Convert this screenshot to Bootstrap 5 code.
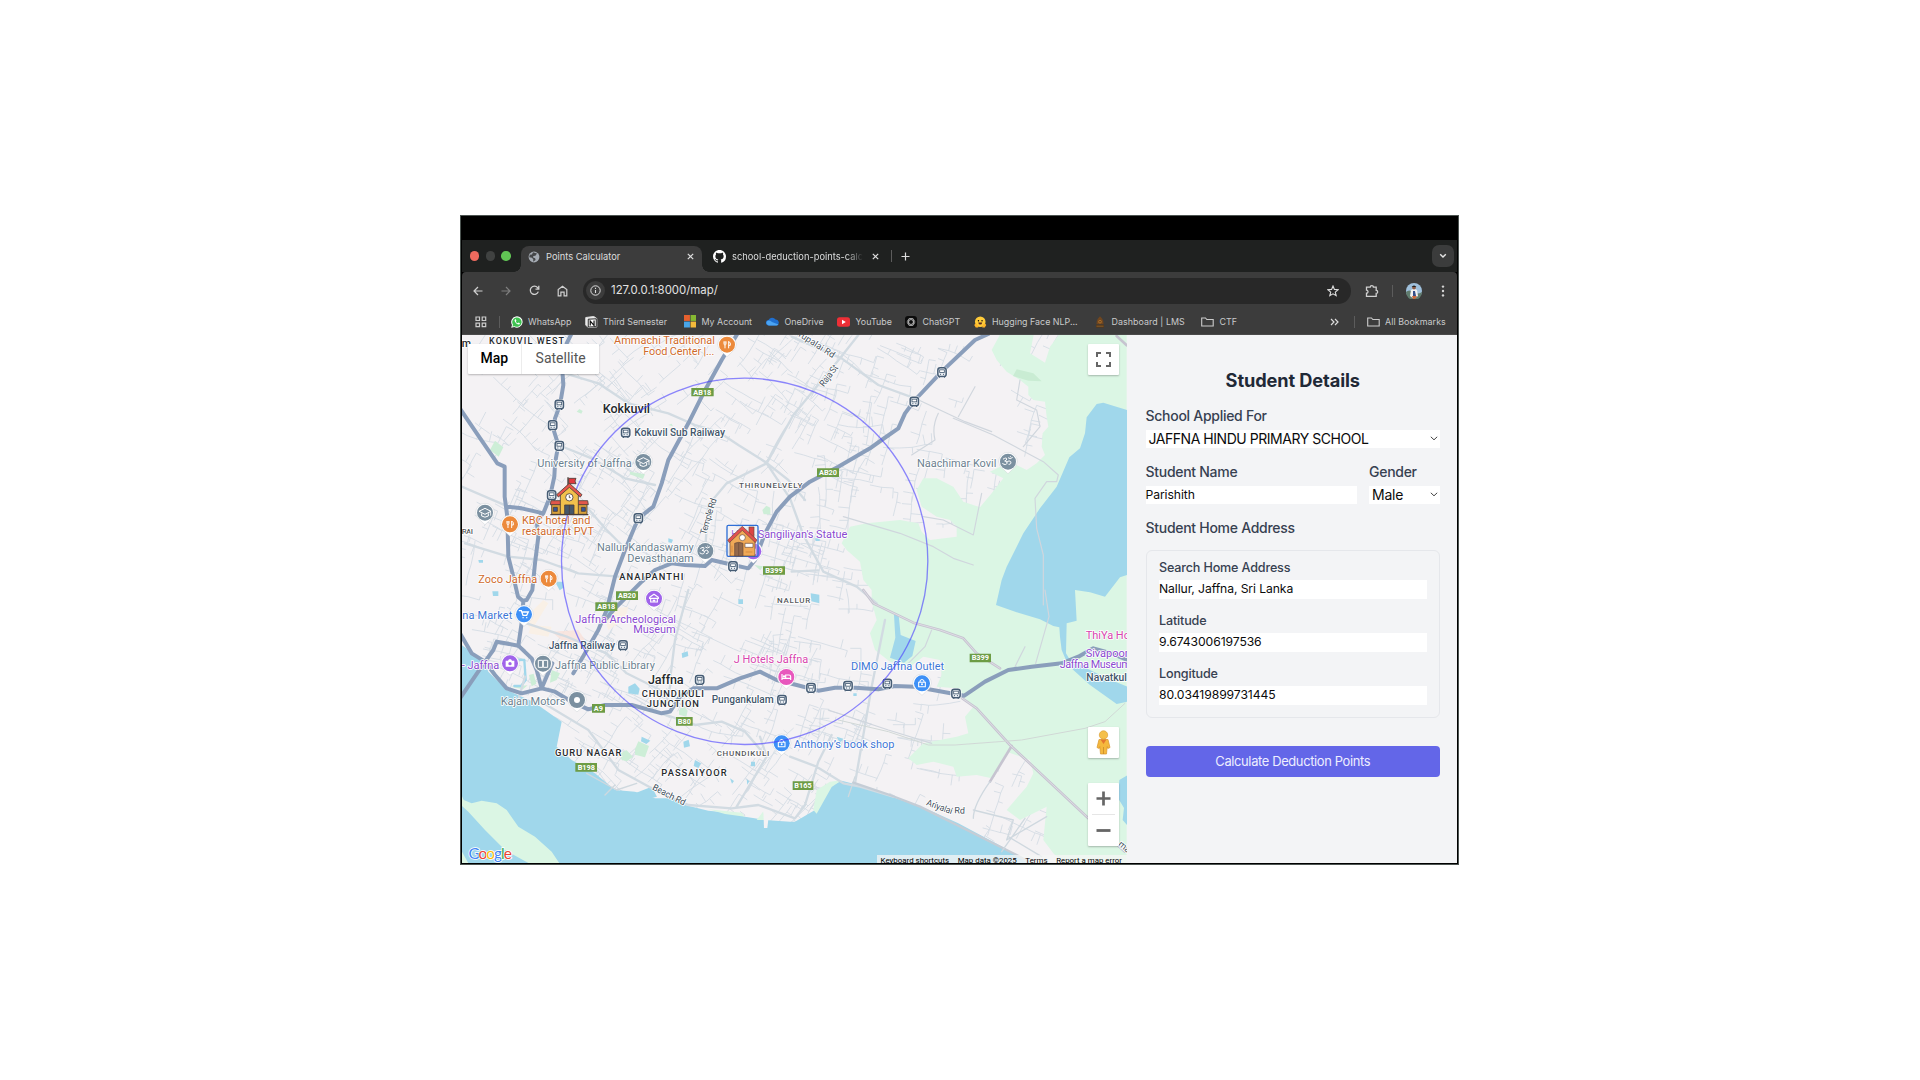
<!DOCTYPE html>
<html lang="en">
<head>
<meta charset="utf-8">
<title>Points Calculator</title>
<link href="https://cdn.jsdelivr.net/npm/bootstrap@5.3.0/dist/css/bootstrap.min.css" rel="stylesheet">
<style>
body{background:#fff;font-family:Inter,"Liberation Sans",sans-serif;padding-top:215px;height:1080px;overflow:hidden}
svg{display:block;flex:none}
.frame{width:999px;height:649.6px;margin-left:460px;background:#000;border:1px solid #4c5451;padding:0 1px 1px 1px}
.notch{height:24px}
.strip{height:32px;background:#1f2120;color:#dcdddd;font-size:9.3px;padding-left:8px}
.dot{width:9.4px;height:9.4px;border-radius:50%;margin-right:6.3px}
.tab-on{width:181px;height:26px;margin-top:6px;margin-left:4px;background:#3c3c3c;border-radius:8px 8px 0 0;padding:0 0 4.5px 7px;position:relative}
.tab-on:before,.tab-on:after{content:"";position:absolute;bottom:0;width:7px;height:7px}
.tab-on:before{left:-7px;background:radial-gradient(circle at 0 0,transparent 6.5px,#3c3c3c 7px)}
.tab-on:after{right:-7px;background:radial-gradient(circle at 100% 0,transparent 6.5px,#3c3c3c 7px)}
.tab-off{width:189px;padding:1px 0 0 11px}
.fade-title{width:131px;overflow:hidden;white-space:nowrap;-webkit-mask-image:linear-gradient(90deg,#000 88%,transparent)}
.vsep{width:1px;height:12px;background:#5c5c5c}
.chev{width:22px;height:22px;border-radius:7px;background:#3b3c3c;margin-right:3px}
.tools{height:36px;background:#3c3c3c;color:#c9c9c9;border-radius:4px 4px 0 0;padding:1.5px 0 0 8px}
.tools .slot{width:28.2px;display:flex;justify-content:center}
.omni{width:768px;height:26px;border-radius:13px;background:#282828;margin-left:7px;padding-left:3px}
.info-dot{width:19px;height:19px;border-radius:50%;background:#3c3c3c}
.url{font-size:11.4px;color:#e2e2e2;margin-left:6px}
.marks{height:27px;background:#3c3c3c;color:#c9cacb;font-size:8.9px;display:grid;grid-template-columns:24px 12px 75.5px 97.5px 82.5px 71px 68px 69px 120px 107px 128.5px 24px 13px 90px;padding:1px 0 0 12.5px;white-space:nowrap;border-bottom:1px solid #4a4a4a}
.marks>span{display:flex;align-items:center;gap:5.5px}
.marks>span:nth-child(4){margin-left:-1px}
.marks>span:nth-child(n+10){letter-spacing:.06px}
.mapbox{width:665px;position:relative;overflow:hidden;background:#f4f2f4;font-family:Roboto,sans-serif}
.ctl{position:absolute;background:#fff;box-shadow:0 1px 2px rgba(0,0,0,.25);border-radius:1px}
.ctl-type{left:5.6px;top:8.5px;width:131.6px;height:30.5px;font-size:14px;color:#565656}
.ctl-type .w-map{width:54.5px;border-right:1px solid #ececec;color:#000;font-weight:500}
.ctl-sq{right:8px;width:31px;height:31px}
.zoom-half{flex:1 1 0;display:flex;align-items:center;justify-content:center}
.legal{position:absolute;right:0;bottom:-4px;height:12px;background:rgba(245,245,245,.75);font-size:7.9px;line-height:12px;color:#000;white-space:nowrap;padding:0 5px 0 4px;gap:8.6px}
.side{background:#f3f4f6;padding:36px 17px 0 18.5px;color:#374151}
.side h1{font-size:18.2px;font-weight:700;color:#1f2937;line-height:18px;margin:0 0 17px;letter-spacing:-.1px}
.lab{font-size:14px;line-height:19px;height:23.5px;font-weight:500;letter-spacing:-.28px}
.fld{background:#fff;height:18.5px;color:#0b0b0b;line-height:18.5px;font-size:12.2px;letter-spacing:-.1px}
.pick{font-size:14px;padding:0 2px 0 3px;letter-spacing:-.46px}
.pick.short{letter-spacing:-.2px}
.group{border:1px solid #e5e7eb;border-radius:6px;height:168px;padding:8px 12.5px;margin-top:5px}
.group .lab{font-size:12.6px;height:21px;line-height:18px;letter-spacing:-.17px}
.group .fld{margin-bottom:13.6px}
.calc,.calc:hover{background:#6366e8;color:#eef;height:31.3px;border-radius:4px;font-size:12.9px;letter-spacing:-.35px;margin-top:27.5px;padding:0;border:0;line-height:32px}
svg text{font-family:Roboto,sans-serif}
.halo text{paint-order:stroke;stroke:#fff;stroke-width:5px;stroke-linejoin:round}
.or{fill:#cf6a2c;font-size:33px}.gy{fill:#6b7f8f;font-size:33px}.pu{fill:#8a49d0;font-size:33px}.bl{fill:#3d76d6;font-size:33px}.pk{fill:#d845ae;font-size:33px}
.st{fill:#43566b;font-size:31px;font-weight:500}.town{fill:#26292d;font-weight:500}.rd{fill:#43505c;font-size:27px}
.shield text{fill:#fff;font-weight:700;font-size:22px;text-anchor:middle}
</style>
</head>
<body>
<div class="frame d-flex flex-column">
  <div class="notch flex-shrink-0"></div>
  <div class="strip flex-shrink-0 d-flex align-items-center">
    <i class="dot" style="background:#ed6a5e"></i><i class="dot" style="background:#404241"></i><i class="dot" style="background:#61c554"></i>
    <div class="tab-on d-flex align-items-center">
      <svg width="12" height="12" viewBox="0 0 12 12"><circle cx="6" cy="6" r="5.4" fill="#a5abb3"/><path d="M5 1.2 4 3.4l-2.2.4-.6 2.4 2.8.5 1.4 1.7-.4 2.4 2.6-1.7-.5-1.9-2-.8.2-1.3 2.1-.4L9 2.400z" fill="#454749"/></svg>
      <span class="ms-auto" style="width:143.5px">Points Calculator</span>
      <svg width="7" height="7" viewBox="0 0 7 7" style="margin-right:8.5px;margin-left:-3px"><path d="M.8.8l5.400 5.400M6.200.8.8 6.200" stroke="#ddd" stroke-width="1.200"/></svg>
    </div>
    <div class="tab-off d-flex align-items-center">
      <svg width="13" height="13" viewBox="0 0 16 16"><path fill="#fff" d="M8 0C3.58 0 0 3.58 0 8c0 3.54 2.29 6.53 5.47 7.59.4.07.55-.17.55-.38 0-.19-.01-.82-.01-1.49-2.01.37-2.53-.49-2.69-.94-.09-.23-.48-.94-.82-1.13-.28-.15-.68-.52-.01-.53.63-.01 1.08.58 1.23.82.72 1.21 1.87.87 2.33.66.07-.52.28-.87.51-1.07-1.78-.2-3.64-.89-3.64-3.95 0-.87.31-1.59.82-2.15-.08-.2-.36-1.02.08-2.12 0 0 .67-.21 2.2.82a7.4 7.4 0 0 1 4 0c1.53-1.04 2.2-.82 2.2-.82.44 1.1.16 1.92.08 2.12.51.56.82 1.27.82 2.15 0 3.07-1.87 3.75-3.65 3.95.29.25.54.73.54 1.48 0 1.07-.01 1.93-.01 2.2 0 .21.15.46.55.38A8.01 8.01 0 0 0 16 8c0-4.42-3.58-8-8-8"/></svg>
      <span class="fade-title" style="margin-left:6px">school-deduction-points-calc</span>
      <svg width="7" height="7" viewBox="0 0 7 7" style="margin-left:9px"><path d="M.8.8l5.400 5.400M6.200.8.8 6.200" stroke="#ddd" stroke-width="1.200"/></svg>
    </div>
    <i class="vsep"></i>
    <svg width="9" height="9" viewBox="0 0 9 9" style="margin-left:8.500px"><path d="M4.500.5v8M.5 4.500h8" stroke="#ddd" stroke-width="1.200"/></svg>
    <span class="chev ms-auto d-flex align-items-center justify-content-center"><svg width="8" height="6" viewBox="0 0 8 6"><path d="M1.200 1.200 4 4l2.800-2.800" fill="none" stroke="#e5e5e5" stroke-width="1.400"/></svg></span>
  </div>
  <div class="tools flex-shrink-0 d-flex align-items-center">
    <span class="slot" style="width:16px"><svg width="10" height="10" viewBox="0 0 10 10"><path d="M9.500 5H1M5 1 1 5l4 4" fill="none" stroke="#d0d0d0" stroke-width="1.200"/></svg></span>
    <span class="slot" style="width:40px"><svg width="10" height="10" viewBox="0 0 10 10"><path d="M.5 5H9M5 1l4 4-4 4" fill="none" stroke="#7f7f7f" stroke-width="1.200"/></svg></span>
    <span class="slot" style="width:16px"><svg width="11" height="11" viewBox="0 0 11 11"><path d="M9.300 6.600A4.100 4.100 0 1 1 8.600 2.700L9.600 3.800M9.800.8v3.300H6.500" fill="none" stroke="#d0d0d0" stroke-width="1.300"/></svg></span>
    <span class="slot" style="width:40px"><svg width="11" height="12" viewBox="0 0 11 12"><path d="M1.200 10.800V4.600L5.500 1.200l4.300 3.400v6.200H7.100V7.200H3.900v3.600z" fill="none" stroke="#d0d0d0" stroke-width="1.200"/></svg></span>
    <div class="omni d-flex align-items-center" style="margin-left:1px">
      <span class="info-dot d-flex align-items-center justify-content-center"><svg width="11" height="11" viewBox="0 0 11 11"><circle cx="5.500" cy="5.500" r="4.700" fill="none" stroke="#ddd"/><path d="M5.500 4.900v3.200M5.500 2.800v1.200" stroke="#ddd" stroke-width="1.100"/></svg></span>
      <span class="url">127.0.0.1:8000/map/</span>
      <svg width="12" height="12" viewBox="0 0 12 12" class="ms-auto" style="margin-right:12px"><path d="m6 1 1.400 3.400 3.700.3-2.800 2.400.9 3.600L6 8.800l-3.200 1.900.9-3.600L.9 4.700l3.700-.3z" fill="none" stroke="#ddd" stroke-width="1.100"/></svg>
    </div>
    <svg width="14" height="14" viewBox="0 0 14 14" style="margin-left:14px"><path d="M1.500 3.200h3.700a1.600 1.600 0 0 1 3.200 0h2.800v3.200a1.500 1.500 0 0 1 0 3v3H1.500V9.200a1.500 1.500 0 0 0 0-3z" fill="none" stroke="#d0d0d0" stroke-width="1.300"/></svg>
    <i class="vsep" style="margin-left:13px"></i>
    <svg width="16" height="16" viewBox="0 0 16 16" style="margin-left:13px"><circle cx="8" cy="8" r="8" fill="#9fc0dc"/><path d="M0 9q3-3 7 0t9 0A8 8 0 0 1 0 9" fill="#607c6e"/><path d="M5 7q3-2 6 0l1 6-4 3-4-3z" fill="#f1f1f1"/><path d="M7 8h2l1 5H7z" fill="#344f8a"/><circle cx="8" cy="4.600" r="1.900" fill="#8b5a45"/><path d="M5.600 4q2.400-3 4.800 0z" fill="#222"/><path d="M6 13h5l-2 3H7z" fill="#c8693f"/></svg>
    <svg width="4" height="12" viewBox="0 0 4 12" style="margin-left:18.500px" fill="#d5d5d5"><circle cx="2" cy="1.600" r="1.200"/><circle cx="2" cy="6" r="1.200"/><circle cx="2" cy="10.400" r="1.200"/></svg>
  </div>
  <div class="marks flex-shrink-0">
    <span><svg width="12" height="12" viewBox="0 0 12 12"><path d="M1 1h3.500v3.500H1zM7.200 1h3.500v3.500H7.200zM1 7.200h3.500v3.500H1zM7.200 7.200h3.500v3.500H7.200z" fill="none" stroke="#ccc" stroke-width="1.200"/></svg></span>
    <span><i class="vsep"></i></span>
    <span><svg width="12" height="12" viewBox="0 0 12 12"><path d="M.2 11.800 1 8.900A5.700 5.700 0 1 1 3.200 11z" fill="#fff"/><path d="M1.400 10.600 2 8.700a4.700 4.700 0 1 1 1.600 1.500z" fill="#3fc351"/><path d="M4 3.200q-1.200 1 .3 3.100T7.700 8.600q1.300-.2 1.200-1.300L7.500 6.600l-.7.7Q5.400 6.700 4.900 5.400l.5-.7L4.800 3.200z" fill="#fff"/></svg>WhatsApp</span>
    <span><svg width="12.500" height="12" viewBox="0 0 12 12"><path d="M.5 1.500 8.500.5 11.500 2.500v8.500L3 11.600.5 9z" fill="#eee" stroke="#ddd"/><path d="M3 3.200 11 2.800v7.900l-8 .3z" fill="#fff" stroke="#111" stroke-width=".9"/><path d="M5 9.500V5l3.800 4.300V4.400" fill="none" stroke="#111" stroke-width="1.200"/></svg>Third Semester</span>
    <span><svg width="12.500" height="12.500" viewBox="0 0 12 12"><path fill="#e5602e" d="M0 0h5.700v5.700H0z"/><path fill="#86b832" d="M6.300 0H12v5.700H6.300z"/><path fill="#49a5e8" d="M0 6.300h5.700V12H0z"/><path fill="#f3b93a" d="M6.300 6.300H12V12H6.300z"/></svg>My Account</span>
    <span><svg width="13" height="9" viewBox="0 0 13 9"><path d="M2.800 8.500a2.700 2.700 0 0 1-.3-5.400A3.900 3.900 0 0 1 9.500 2.600 3 3 0 0 1 10.500 8.500z" fill="#1f6fd0"/><path d="M2.800 8.500A2.700 2.700 0 0 1 1 4.200Q3 2.500 6 5l6.500 2.500q-.7 1-2 1z" fill="#4ba4f2"/></svg>OneDrive</span>
    <span><svg width="13" height="10" viewBox="0 0 13 10"><rect width="13" height="9.600" y=".2" rx="2.500" fill="#ee2f36"/><path d="M5 2.800v4.400L8.800 5z" fill="#fff"/></svg>YouTube</span>
    <span><svg width="12" height="12" viewBox="0 0 12 12"><rect width="12" height="12" rx="3" fill="#0c0c0c"/><g fill="none" stroke="#ddd" stroke-width=".55"><ellipse cx="6" cy="6" rx="4" ry="2.300"/><ellipse cx="6" cy="6" rx="4" ry="2.300" transform="rotate(60 6 6)"/><ellipse cx="6" cy="6" rx="4" ry="2.300" transform="rotate(120 6 6)"/></g></svg>ChatGPT</span>
    <span><svg width="12.500" height="12" viewBox="0 0 12 12"><circle cx="6" cy="5.800" r="5.300" fill="#ffcb39"/><path d="M0 9q1.500-2.500 3.500 0L4 11.500H1.500zM12 9q-1.500-2.500-3.500 0L8 11.500h2.500z" fill="#ffb52a"/><circle cx="4.200" cy="4.800" r=".7"/><circle cx="7.800" cy="4.800" r=".7"/><path d="M4 6.400h4Q7.700 8.600 6 8.600T4 6.400" fill="#5b2b22"/></svg>Hugging Face NLP...</span>
    <span><svg width="12" height="12" viewBox="0 0 12 12"><path d="M6 .3 8 2.600q2.200 3 1.500 5.600h-7Q1.800 5.600 4 2.600z" fill="#70461f"/><circle cx="6" cy="5.800" r="1.700" fill="#b3742c"/><circle cx="6" cy="5.800" r=".7" fill="#3b2512"/><path d="M2 8.800h8v2.800H2z" fill="#553719"/><path d="M2.500 10.200h7" stroke="#9a6a30" stroke-width=".7"/></svg>Dashboard | LMS</span>
    <span><svg width="13" height="10" viewBox="0 0 13 10"><path d="M.7 9V1h3.800l1.300 1.500h6.400V9z" fill="none" stroke="#ccc" stroke-width="1.100"/></svg>CTF</span>
    <span><svg width="9" height="8" viewBox="0 0 9 8"><path d="M1 1l3 3-3 3M5 1l3 3-3 3" fill="none" stroke="#ddd" stroke-width="1.200"/></svg></span>
    <span><i class="vsep"></i></span>
    <span><svg width="13" height="10" viewBox="0 0 13 10"><path d="M.7 9V1h3.800l1.300 1.500h6.400V9z" fill="none" stroke="#ccc" stroke-width="1.100"/></svg>All Bookmarks</span>
  </div>
  <div class="d-flex flex-grow-1" style="min-height:0">
    <div class="mapbox flex-shrink-0">
      <svg width="665" height="529" viewBox="462 335 665 529">
        <defs>
          <g id="pin"><path d="M-28 0a28 28 0 1 1 56 0q0 14-17 26L0 36-11 26Q-28 14-28 0" fill="#fff" stroke="#b9bec4" stroke-width="1"/><circle r="24" fill="currentColor"/></g>
          <g id="stn"><rect x="-17" y="-17" width="34" height="34" rx="11" fill="#fff" opacity=".85"/><rect x="-12.500" y="-13.500" width="25" height="26" rx="7" fill="#e8edf2" stroke="#465c74" stroke-width="4.500"/><rect x="-7" y="-7.500" width="14" height="8" fill="#fff" stroke="#465c74" stroke-width="2.500"/><path d="M-6 6h3M3 6h3M-5 13l-3 3M5 13l3 3" stroke="#465c74" stroke-width="3"/></g>
          <path id="food" d="M-9-10v7q0 4 3 4v10M-3-10v7q0 4-3 4M-6-10v8M5 11V-10q7 4 5 12H5" fill="none" stroke="#fff" stroke-width="3"/>
          <g id="cap"><path d="M0-13 18-4 0 5-18-4z" fill="none" stroke="#fff" stroke-width="3"/><path d="M-10 2v8q10 7 20 0V2" fill="none" stroke="#fff" stroke-width="3"/><path d="M17-3V9" stroke="#fff" stroke-width="2.500"/></g>
          <path id="om" d="M-14-8q10-6 10 0 0 5-6 6 9 0 7 7-3 7-13 1M-3 1q7-7 11-1 3 8-5 8M1-11q5 5 12-1M7-15h.5" fill="none" stroke="#fff" stroke-width="3" stroke-linecap="round"/>
          <path id="lock" d="M-10-3h20v13h-20zM-6-2v-5q6-9 12 0v5" fill="none" stroke="#fff" stroke-width="3.200"/>
        </defs>
        <g transform="translate(455 330) scale(.33333)" fill="none" stroke-linecap="round" stroke-linejoin="round">
          <path id="streets" stroke="#d5dde4" stroke-width="2.700"/>
          <!-- built-up blocks and parks -->
          <g fill="#faf0e4" opacity=".85"><path d="M205 870l60-60 15 10-50 80zM230 885l60 5-10 30-60-10zM440 840l80-10-10 40-50 30z"/><path d="M290 905l80-5 20 30-60 10z" fill="#f9e3dc"/></g>
          <g fill="#cdeed7"><path d="M105 360l15-28 25 20-14 28zM525 425l45 8-6 14-40-14zM922 540l12-13 12 6v20h-20zM500 1290l-6-18 20-12 20 20-18 14zM540 1258l10-24 32 14-12 34-30-8zM290 1020l25 10-10 20-20 8zM672 1140l14-12 12 14-4 18-22-6zM365 245l8-8 10 6-4 8zM222 1035l14-4 8 30-14 8zM898 705l26 4-8 12zM168 1070l50-4-14 12zM640 285l10-4 4 8z"/></g>
          <!-- eastern fields -->
          <g transform="translate(1005 0)">
            <path fill="#dbf6e4" d="M632 10 605 60l15 30 30 35 40 25 25 20v25l15 15 35 5 5 45 5 30-17 20-3 40 10 25-25 25-30 20-40-20-40 10-30 15 40 20-35 45-35 42-50-17-30-45-50-25h-40l-20 35 15 50 45 30 40 10 20 20v30l-80 10-25-25-10-25-55-10-100 10-50 10-25 50 15 20 40 35 10 55 25 30v35l15 55-20 40 15 50 45 35 60 15 40-30 50 10 5 45-15 35 60 5 20 25 30 30-25 30 10 50-35 10-100 20-45 45 25 20 50-10 60 15 10 30 60-5 45 10 45-80 70 25 10 40-20 40-60 70 40 30 80-40-5 50-5 50 30 40 40 40h180V10H810l-30 40-15 48-45-28 12-60z"/>
            <path fill="#c9ecd3" d="M680 118l50 12 25 24-40-2-46-14z"/>
            <path fill="#a0d7eb" d="M1012 240 940 218l-20 4-30 40-5 48-15 45-32 27-38 88-50 65-50 75-20 40-30 60-15 40-17 75 72 25 60 18 40 20 18 4 2 28 5 40 15 35 20 25 50 45 80 57 32-7v-45l-62-25-80-40-30-15-12-20 2-90 30-8-5-92 45 7 45 13 45-58 22-7zM312 855l14 0 6 60 45 18-10 45-25 20-42-15 16-60zM988 1350l24-14v150l-14-16 4-36-18-30z"/>
            <path fill="#a0d7eb" d="M62 790l26 4v26l-24-6zM140 1220l20 6-10 14zM190 1090h10v8h-10zM75 625h14v8H77z"/>
          </g>
          <!-- sea, island, harbour -->
          <g transform="translate(0 780)">
            <path fill="#a0d7eb" d="M10 160l10 5 65 45 15 35 55 55 40 18 40 17 85 60-15 75 45 40 70 40 60 50 60 5 60 20h50l40 20 70 17 80 8 30 10 60 10 75 5h15l60-35 10-20 30-50 40-18 50 13 100 35 100 35 100 45 140 75 95 60H10z"/>
            <path fill="#dbf6e4" d="M18 612l8 18 24 10 30-8 45 8 30 20 35 50 50 30 50 45 30 45H240l-90-50-60-60-50-55-22-20z"/>
            <path fill="#dbf6e4" d="M1075 660l10-60 40-25 35-4-30 20-45 80zM760 658l100 10 10 12-60-8zM905 690l20-26 6 26zM18 780l25 45H18z"/>
            <path fill="#f4f2f4" d="M925 660l18 2-6 52h-10z"/>
            <path fill="#a0d7eb" d="M520 290l20-10 14 16-4 18-30-4zM560 440l26 12-12 10-16-8zM720 510l18 10-8 14-14-6zM685 455l16-6 4 20-18 4zM680 190l18-6 2 14-18 6zM850 28h14v14h-14zM888 515h12v14h-12zM825 565l12 8-6 8zM875 568l8 6-6 10zM540 610l50-20 16 30-30 8zM455 68l8-14 8 16v20zM112 4h18v14h-16z"/>
            <path d="M150 208q8-16 16 0l42 2 4 60-14 18h-20" stroke="#a0d7eb" stroke-width="7"/>
            <path d="M450 615l30-30M545 580l-60 20-90-50M1180 620l20-60" stroke="#cfd8de" stroke-width="4"/>
          </g>
          <path d="M300 755l24 0 2 18-12 8zM640 625l14 4-4 10-10-2zM70 690h14v8H72z" fill="#a0d7eb"/>
          <!-- secondary roads -->
          <g stroke="#d2dbe2" stroke-width="7">
            <path d="M330 130l100 30 90 60 120 30 80 35 70 20 60 40 80 50 70 55 50 60M1005 275q-40 60-70 125l-120 60-55 65-10 140M20 470l140 60M310 345l100 40 100 60 90 20M300 490l90 35 60 70 50 50M30 640l130 40 100 10 110 40 120 10M935 400l70 105 40 110 60 110 100 45 60 50M1210 15l-55 70-140 170-80 145M1010 20l150 65 110 80 110 40M700 780l-40 150-15 120M650 1050l-20 80"/>
            <path d="M215 880l120 40 120 50 60 60 120 60M250 1110l150 90 90 120 110 60 100 45 130 10 80-10 110 40 30-40 40-130 40-80M620 1150l100 35 80-10 70 30 60 70M845 1430l90-150-20-60M1290 870l-40 200-50 290M1005 1280l80 30 80 50 50 10 100 30M1010 725l80-4M190 1110l20-70"/>
          </g>
          <g stroke="#d0d6dd" stroke-width="3.500">
            <path d="M1380 205l150 70 80 30M1450 250q-20 40-10 80l-70 45M1495 265l120 50 150 80 45 40-5 20h-30l-35 50 5 90 20 80v150M1560 170l-50 90M1695 150l-10 60 60 30 10 50-50 60M1580 490l-25 125-90-45-60-10M1165 560l170 50 100 40 60 35 60 20M1770 780l12 80-40 140M1430 900l-20 50-50 50M1430 1240l-130-40-180-60M1710 950l-30 60"/>
          </g>
          <g stroke="#c6c4d0" stroke-width="8"><path d="M1225 780l30 40 120 58 80 22 70 25 40 45 70 45M1503 1092l62 43 100 110 70 65 160 150 115 105M1670 1248l-65 107M1985 18l30 28"/></g>
          <g stroke="#dfdde5" stroke-width="3"><path d="M1225 780l30 40 120 58 80 22 70 25 40 45 70 45M1503 1092l62 43 100 110 70 65 160 150 115 105"/></g>
          <path d="M1150 1170l150 35 120 40h80l200-15 190-35 60-20 60-55" stroke="#d1d8d6" stroke-width="3"/>
          <path d="M1195 1358l110 37 90 35 130 65 160 80 90 50" stroke="#c5cdd6" stroke-width="7"/>
          <path d="M1605 1355q-50 70-50 110M1555 1440l120 30-20 60 120-70M1640 1565l70-100M1660 1520l100 60" stroke="#cfd8df" stroke-width="4"/>
          <!-- main roads -->
          <g stroke="#8a9ebb" stroke-width="12">
            <path d="M350 10l-15 30-13 80 3 45-10 60-15 40-4 35 14 45-10 55-2 40-13 60-20 50-20 20 5 50-10 80-8 80-17 30-12 2-14-12-14-60-15-60-3-120-8-60v-90l-22-10-55-80-57-84M155 530l45 5 65 15M205 812l-4 60-11 75"/>
            <path d="M848 10l-48 80-55 100-45 90-60 110-20 70-25 70-45 35-40 95-30 80-25 100-25 60-40 70-35 60"/>
            <path d="M1600 12l-40 18-100 95-80 85-30 40-20 45-50 35-35 25-95 55-85 45-60 45-40 45-35 65-30 80-20 25-45-10-65-15-20 18-60-3-40-5-50 20-40 35-50 50-30 30-25 30"/>
            <path d="M15 910l35 60 40 25 30 40 35 40 45 15 60-15 40 10 50 30 50 23 50-13h80l90 25 25-5 30-45 40-25h70l70-30 60-20 50 25 60 15 65 17 50-9h60l70 5 50-10 60 2 70 13 78 14 62-42 70-35 70-10 90-10 50-20 45-25 55 15 75 32"/>
            <path d="M15 1105l75-110 25-35 10-25 65 12 40 38 15 35 15 55 32-75"/>
          </g>
        </g>
        <!-- labels -->
        <g class="halo" transform="translate(455 330) scale(.33333)">
          <text x="20" y="50" font-size="32" class="town">m</text>
          <text x="102" y="42" textLength="225" font-size="27" class="town">KOKUVIL WEST</text>
          <text x="477" y="42" textLength="303" class="or">Ammachi Traditional</text>
          <text x="565" y="75" textLength="213" class="or">Food Center |...</text>
          <text x="443" y="250" textLength="142" font-size="38" class="town">Kokkuvil</text>
          <text x="538" y="318" textLength="272" class="st">Kokuvil Sub Railway</text>
          <text x="247" y="410" textLength="283" class="gy">University of Jaffna</text>
          <text x="852" y="474" textLength="190" font-size="24" class="town" fill-opacity=".8">THIRUNELVELY</text>
          <text x="20" y="612" textLength="34" font-size="24" class="town" fill-opacity=".8">RAI</text>
          <text x="201" y="583" textLength="205" class="or">KBC hotel and</text>
          <text x="201" y="615" textLength="216" class="or">restaurant PVT</text>
          <text x="426" y="663" textLength="290" class="gy">Nallur Kandaswamy</text>
          <text x="517" y="696" textLength="199" class="gy">Devasthanam</text>
          <text x="70" y="760" textLength="177" class="or">Zoco Jaffna</text>
          <text x="493" y="751" textLength="192" font-size="28" class="town">ANAIPANTHI</text>
          <text x="828" y="623" class="pu">H</text>
          <text x="908" y="623" textLength="269" class="pu">Sangiliyan's Statue</text>
          <text x="0" y="0" transform="translate(752 616) rotate(-73)" class="rd" textLength="113">Temple Rd</text>
          <text x="0" y="0" transform="translate(1025 15) rotate(33)" class="rd" textLength="128">Tupalai Rd</text>
          <text x="0" y="0" transform="translate(1106 172) rotate(-53)" class="rd" textLength="74">Raja St</text>
          <text x="1386" y="411" textLength="238" class="gy">Naachimar Kovil</text>
          <text x="966" y="818" textLength="100" font-size="24" class="town" fill-opacity=".8">NALLUR</text>
          <g transform="translate(0 780)">
            <text x="22" y="88" textLength="150" class="bl">na Market</text>
            <text x="361" y="98" textLength="302" class="pu">Jaffna Archeological</text>
            <text x="535" y="130" textLength="127" class="pu">Museum</text>
            <text x="281" y="176" textLength="199" class="st">Jaffna Railway</text>
            <text x="20" y="236" textLength="113" class="pu">- Jaffna</text>
            <text x="300" y="236" textLength="300" class="gy">Jaffna Public Library</text>
            <text x="137" y="345" textLength="194" class="gy">Kajan Motors</text>
            <text x="579" y="283" textLength="107" font-size="38" class="town">Jaffna</text>
            <text x="560" y="321" textLength="187" font-size="28" class="town">CHUNDIKULI</text>
            <text x="575" y="350" textLength="157" font-size="28" class="town">JUNCTION</text>
            <text x="770" y="340" textLength="186" class="st">Pungankulam</text>
            <text x="836" y="220" textLength="224" class="pk">J Hotels Jaffna</text>
            <text x="1188" y="240" textLength="279" class="bl">DIMO Jaffna Outlet</text>
            <text x="1016" y="475" textLength="302" class="bl">Anthony’s book shop</text>
            <text x="300" y="499" textLength="199" font-size="28" class="town">GURU NAGAR</text>
            <text x="619" y="557" textLength="196" font-size="28" class="town">PASSAIYOOR</text>
            <text x="785" y="498" textLength="158" font-size="24" class="town" fill-opacity=".8">CHUNDIKULI</text>
            <text x="0" y="0" transform="translate(590 598) rotate(27)" class="rd" textLength="108">Beach Rd</text>
            <text x="0" y="0" transform="translate(1412 645) rotate(20)" class="rd" textLength="82">Ariyalai</text>
            <text x="0" y="0" transform="translate(1498 670) rotate(2)" class="rd">Rd</text>
            <text x="0" y="0" transform="translate(1988 765) rotate(40)" class="rd">mai</text>
            <text x="1892" y="146" class="pk">ThiYa Hotel</text>
            <text x="1892" y="202" class="pu">Sivapoomi</text>
            <text x="1814" y="234" class="pu" textLength="214">Jaffna Museum</text>
            <text x="1894" y="273" class="st">Navatkuli</text>
          </g>
        </g>
        <!-- route shields -->
        <g class="shield" transform="translate(455 330) scale(.33333)" fill="#6d9c45">
          <path d="M709 174h67v25h-67zM924 709h66v25h-66zM483 784h66v26h-66zM421 817h66v26h-66zM1086 415h66v26h-66zM1544 971h64v26h-64zM411 1122h39v26h-39zM663 1161h50v26h-50zM361 1299h65v26h-65zM1013 1354h62v26h-62z"/>
          <text x="742" y="194">AB18</text><text x="957" y="729">B399</text><text x="516" y="804">AB20</text><text x="454" y="837">AB18</text><text x="1119" y="435">AB20</text><text x="1576" y="991">B399</text><text x="430" y="1142">A9</text><text x="688" y="1181">B80</text><text x="394" y="1319">B198</text><text x="1044" y="1374">B165</text>
        </g>
        <g transform="translate(455 330) scale(.33333)">
          <use href="#stn" x="313" y="224"/><use href="#stn" x="293" y="286"/><use href="#stn" x="313" y="348"/><use href="#stn" x="290" y="496"/><use href="#stn" x="512" y="308"/><use href="#stn" x="550" y="565"/><use href="#stn" x="834" y="709"/><use href="#stn" x="1461" y="127"/><use href="#stn" x="1378" y="215"/><use href="#stn" x="504" y="946"/><use href="#stn" x="734" y="1050"/><use href="#stn" x="981" y="1110"/><use href="#stn" x="1068" y="1074"/><use href="#stn" x="1179" y="1068"/><use href="#stn" x="1297" y="1061"/><use href="#stn" x="1503" y="1091"/>
          <g color="#ec8a3c"><g transform="translate(816 44)"><use href="#pin"/><use href="#food"/></g><g transform="translate(165 583)"><use href="#pin"/><use href="#food"/></g><g transform="translate(281 746)"><use href="#pin"/><use href="#food"/></g></g>
          <g color="#7b90a0"><g transform="translate(565 396)"><use href="#pin"/><use href="#cap"/></g><g transform="translate(90 548)"><use href="#pin"/><use href="#cap"/></g><g transform="translate(751 663)"><use href="#pin"/><use href="#om"/></g><g transform="translate(1659 395)"><use href="#pin"/><use href="#om"/></g>
          <g transform="translate(264 1001)"><use href="#pin"/><path d="M-14-10h13V11h-13zM1-10h13V11H1z" fill="none" stroke="#fff" stroke-width="3"/></g><g transform="translate(366 1110)"><use href="#pin"/><circle r="9" fill="#fff"/></g></g>
          <g color="#a064ea"><g transform="translate(597 806)"><use href="#pin"/><path d="M-13-4 0-13l13 9v3h-26zM-10 1v9h20V1" fill="none" stroke="#fff" stroke-width="3.500"/><path d="M-4 3h8v6h-8z" fill="#fff"/></g><g transform="translate(165 1000)"><use href="#pin"/><path d="M-13-8h7l3-4H3l3 4h7V10h-26z" fill="#fff"/><circle cy="1" r="5" fill="#a064ea"/></g><g transform="translate(895 664)"><use href="#pin"/><path d="M-8-8h16V8H-8z" fill="#fff"/></g></g>
          <g color="#3e90f6"><g transform="translate(207 853)"><use href="#pin"/><path d="M-14-11h6L-3 3H8L13-7H-6M-3 10h.5M8 10h.5" fill="none" stroke="#fff" stroke-width="3.800" stroke-linecap="round"/></g><g transform="translate(980 1240)"><use href="#pin"/><use href="#lock"/><circle cy="3" r="3" fill="#fff"/></g><g transform="translate(1401 1060)"><use href="#pin"/><use href="#lock"/><circle cy="3" r="3" fill="#fff"/></g></g>
          <g color="#e857bd" transform="translate(994 1041)"><use href="#pin"/><path d="M-13-9V9M-13 4h26V9M13 4V-1q0-5-5-5H-2V3" fill="none" stroke="#fff" stroke-width="3.500"/><circle cx="-7" cy="-2" r="3.500" fill="#fff"/></g>
          <circle cx="869" cy="694" r="549.500" fill="none" stroke="#4840ff" stroke-opacity=".62" stroke-width="4"/>
          <!-- school marker -->
          <g transform="translate(343 500)" stroke="#4a3d38" stroke-width="2.500" stroke-linejoin="round">
            <path d="M-4-32v-26" stroke-width="4"/><path d="M-2-55h22l-3 8 3 8H-2z" fill="#e0393f"/>
            <path d="M-53 22h106v31H-53z" fill="#d9a13b"/><path d="M-55 12h35v12h-37zM55 12H20v12h37z" fill="#e2574c"/>
            <path d="M-27-8 0-32 27-8v61h-54z" fill="#f1c14c"/><path d="M-38-6 0-40 38-6l-5 7L0-28-33 1z" fill="#e7564c"/>
            <circle cy="2" r="11" fill="#fff"/><path d="M0-4v7h4" fill="none"/><path d="M-14 53V25h28v28z" fill="#45576a"/><path d="M0 25v28"/><path d="M-48 32h12v12h-12zM36 32h12v12H36z" fill="#35569a"/><path d="M-57 54H57" stroke-width="4"/>
          </g>
          <!-- home marker -->
          <g transform="translate(862 632)" stroke="#6a4a3a" stroke-width="2" stroke-linejoin="round">
            <rect x="-46" y="-46" width="93" height="93" rx="4" fill="#f4f2f4" fill-opacity=".25" stroke="#2f6fd6" stroke-width="4"/>
            <path d="M20-41h15v34H20z" fill="#dd4444"/><path d="M-37-6 0-32 38-6v52h-75z" fill="#f0a957"/><path d="M-44-2 0-43 44-2l-5 8L0-31-39 6z" fill="#e2504f"/>
            <circle cy="-9" r="9" fill="#fff"/><path d="M-23 46V8q12-6 25 0v38z" fill="#94694b"/><path d="M-11 7v39"/><path d="M8 8h24v12H8z" fill="#fff"/><path d="M10 34h20M-31 15v20" stroke="#c97c37"/>
          </g>
        </g>
        <text x="468.400" y="859" textLength="43.500" font-size="15.500" stroke="#fff" stroke-width="1.600" style="font-family:Lato,sans-serif;paint-order:stroke"><tspan fill="#4285f4">G</tspan><tspan fill="#ea4335">o</tspan><tspan fill="#fbbc04">o</tspan><tspan fill="#4285f4">g</tspan><tspan fill="#34a853">l</tspan><tspan fill="#ea4335">e</tspan></text>
      </svg>
      <div class="ctl ctl-type d-flex text-center align-items-stretch"><span class="w-map d-flex align-items-center justify-content-center">Map</span><span class="flex-grow-1 d-flex align-items-center justify-content-center">Satellite</span></div>
      <div class="ctl ctl-sq d-flex align-items-center justify-content-center" style="top:8.500px"><svg width="15" height="15" viewBox="0 0 15 15"><path d="M1 5V1h4M10 1h4v4M14 10v4h-4M5 14H1v-4" fill="none" stroke="#666" stroke-width="2"/></svg></div>
      <div class="ctl ctl-sq d-flex align-items-center justify-content-center" style="top:392px"><svg width="15" height="25" viewBox="0 0 15 25"><path d="M3 9.500h9l2 8-2.200 1-.6-2L10.500 24h-6L3.800 16.500l-.6 2L1 17.500z" fill="#f5b83d" stroke="#d9952c" stroke-width=".7"/><path d="M4.500 9.500h6L7.500 14z" fill="#e5762f"/><path d="M7.500 17v7" stroke="#c98a2a" stroke-width=".8"/><circle cx="7.500" cy="5" r="4.200" fill="#f5c04a" stroke="#dba036" stroke-width=".7"/></svg></div>
      <div class="ctl ctl-sq d-flex flex-column" style="top:448px;height:63px"><span class="zoom-half"><svg width="15" height="15" viewBox="0 0 15 15"><path d="M7.500.5v14M.5 7.500h14" stroke="#666" stroke-width="2.700"/></svg></span><span style="height:1px;background:#e6e6e6;margin:0 4px"></span><span class="zoom-half"><svg width="15" height="3" viewBox="0 0 15 3"><path d="M.5 1.500h14" stroke="#666" stroke-width="2.800"/></svg></span></div>
      <div class="legal d-flex"><span>Keyboard shortcuts</span><span>Map data ©2025</span><span>Terms</span><span>Report a map error</span></div>
    </div>
    <div class="side flex-grow-1">
      <h1 class="text-center">Student Details</h1>
      <div class="lab">School Applied For</div>
      <div class="fld pick d-flex align-items-center justify-content-between"><span>JAFFNA HINDU PRIMARY SCHOOL</span><svg width="8" height="5" viewBox="0 0 8 5"><path d="M.8.8 4 3.800 7.200.8" fill="none" stroke="#444" stroke-width="1"/></svg></div>
      <div class="d-flex" style="margin-top:14px;gap:12px">
        <div class="flex-grow-1"><div class="lab">Student Name</div><div class="fld">Parishith</div></div>
        <div style="width:71px"><div class="lab">Gender</div><div class="fld pick short d-flex align-items-center justify-content-between"><span>Male</span><svg width="8" height="5" viewBox="0 0 8 5"><path d="M.8.8 4 3.800 7.200.8" fill="none" stroke="#444" stroke-width="1"/></svg></div></div>
      </div>
      <div class="lab" style="margin-top:14px;height:27px">Student Home Address</div>
      <div class="group">
        <div class="lab">Search Home Address</div><div class="fld">Nallur, Jaffna, Sri Lanka</div>
        <div class="lab">Latitude</div><div class="fld">9.6743006197536</div>
        <div class="lab">Longitude</div><div class="fld">80.03419899731445</div>
      </div>
      <button class="btn calc w-100 d-block" type="button">Calculate Deduction Points</button>
    </div>
  </div>
</div>
<script src="https://cdn.jsdelivr.net/npm/bootstrap@5.3.0/dist/js/bootstrap.bundle.min.js"></script>
<script>
// Residential street network: long bent lanes with short side streets, from a fixed seed.
let seed = 11;
const rnd = () => (seed = (seed * 16807) % 2147483647) / 2147483647;
let d = "";
for (let i = 0; i < 760; i++) {
  let x = rnd() * 1900, y = rnd() * 1600;
  if (x > 1250 && rnd() < 0.6) continue;
  const lean = 0.25 * Math.sin(x / 300) + 0.2 * Math.cos(y / 260);
  let a = (rnd() < 0.5 ? -1.12 : 0.42) + lean;
  d += `M${x.toFixed(0)} ${y.toFixed(0)}`;
  const n = 2 + Math.floor(rnd() * 4);
  for (let k = 0; k < n; k++) {
    const len = 16 + rnd() * 26;
    a += (rnd() - 0.5) * 0.3;
    const dx = Math.cos(a) * len, dy = Math.sin(a) * len;
    x += dx; y += dy;
    d += `l${dx.toFixed(0)} ${dy.toFixed(0)}`;
    if (rnd() < 0.75) {
      const s = (rnd() < 0.5 ? 1 : -1) * (10 + rnd() * 22);
      const sx = -Math.sin(a) * s, sy = Math.cos(a) * s;
      d += `l${sx.toFixed(0)} ${sy.toFixed(0)}M${x.toFixed(0)} ${y.toFixed(0)}`;
    }
  }
}
document.getElementById("streets").setAttribute("d", d);
</script>
</body>
</html>
